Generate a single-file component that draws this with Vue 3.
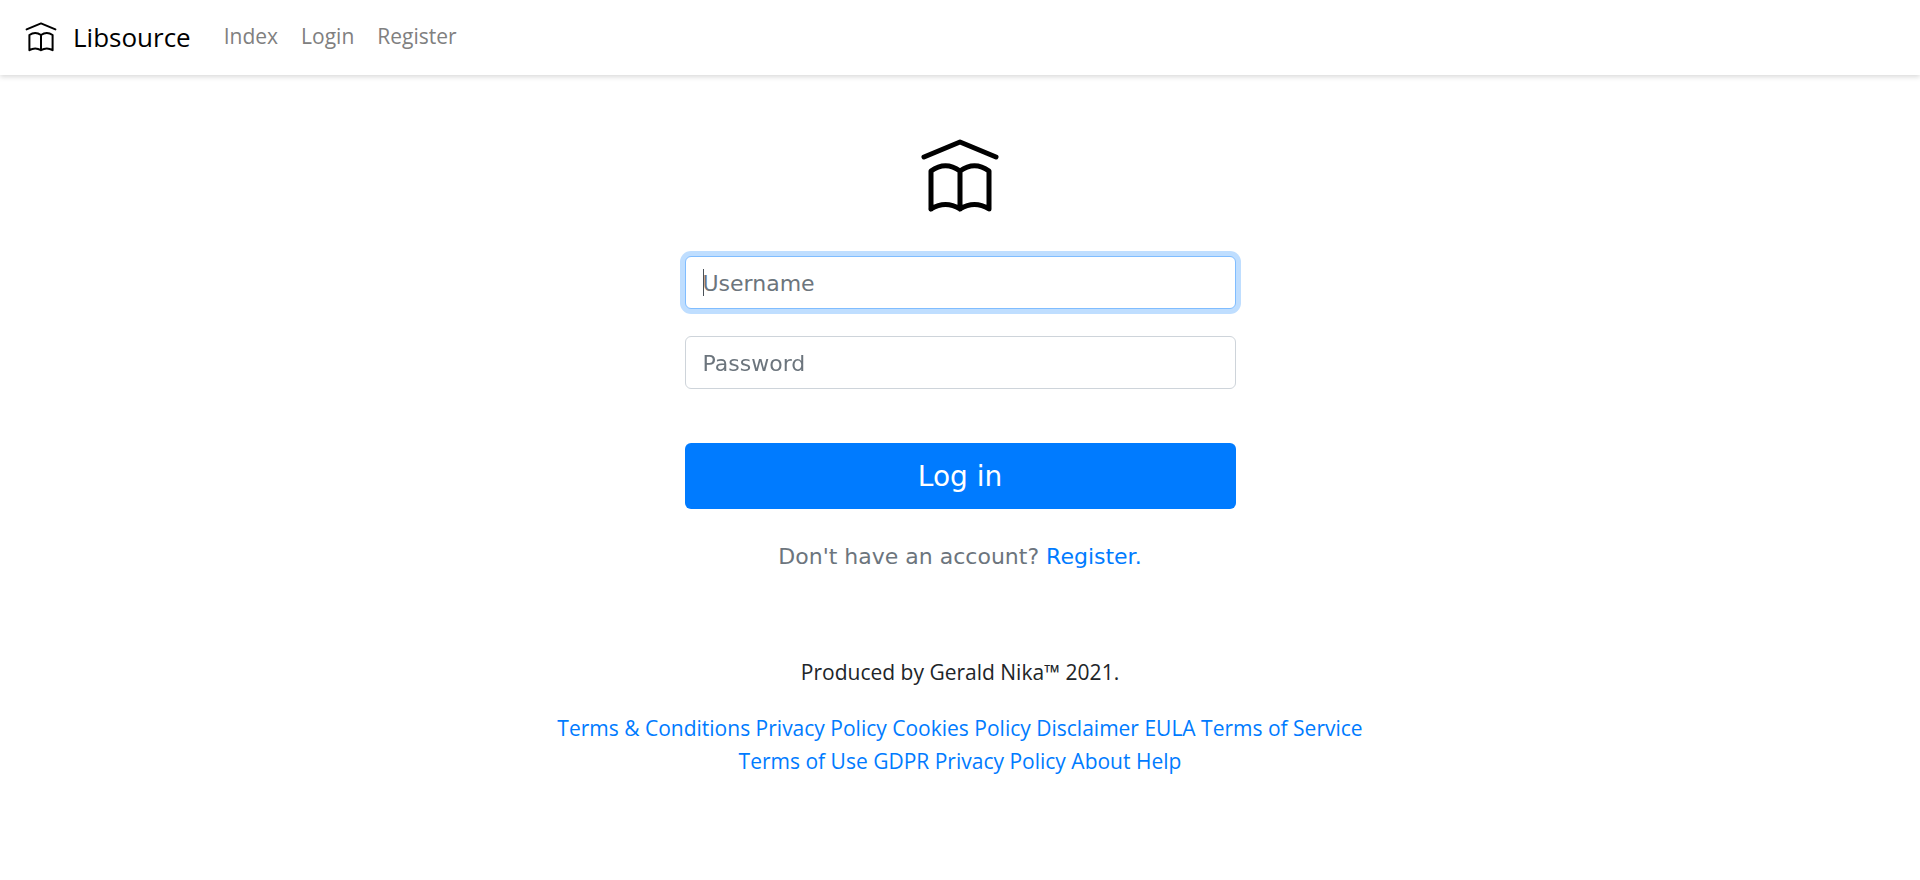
<script setup>
import { onMounted, ref } from 'vue'

const username = ref('')
const password = ref('')
const usernameField = ref(null)

const navLinks = ['Index', 'Login', 'Register']
const footerLinks = [
  'Terms & Conditions',
  'Privacy Policy',
  'Cookies Policy',
  'Disclaimer',
  'EULA',
  'Terms of Service',
  'Terms of Use',
  'GDPR Privacy Policy',
  'About',
  'Help',
]

onMounted(() => usernameField.value.focus())
</script>

<template>
  <div class="page">
    <header class="navbar">
      <a class="brand" href="#">
        <svg class="brand-logo" viewBox="0 0 80 74" aria-hidden="true">
          <path d="M4 18 40 3l36 15M11 70V32q14.500-10.500 29 0v38q-14.500-9-29 0M40 32q14.500-10.500 29 0v38q-14.500-9-29 0" />
        </svg>
        <span>Libsource</span>
      </a>
      <nav class="nav">
        <a v-for="link in navLinks" :key="link" href="#">{{ link }}</a>
      </nav>
    </header>

    <main class="login">
      <svg class="logo" viewBox="0 0 80 74" role="img" aria-label="Libsource">
        <path d="M4 18 40 3l36 15M11 70V32q14.500-10.500 29 0v38q-14.500-9-29 0M40 32q14.500-10.500 29 0v38q-14.500-9-29 0" />
      </svg>
      <form class="form" @submit.prevent>
        <div class="field-row">
          <input ref="usernameField" v-model="username" class="field" type="text" aria-label="Username" placeholder="Username" autofocus />
          <span class="caret" aria-hidden="true"></span>
        </div>
        <div class="field-row">
          <input v-model="password" class="field" type="password" aria-label="Password" placeholder="Password" />
          <span class="caret" aria-hidden="true"></span>
        </div>
        <button class="submit" type="submit">Log in</button>
        <p class="signup">Don't have an account? <a href="#">Register.</a></p>
      </form>
    </main>

    <footer class="footer">
      <p>Produced by Gerald Nika™ 2021.</p>
      <p class="footer-links">
        <template v-for="link in footerLinks" :key="link"><a href="#">{{ link }}</a>{{ ' ' }}</template>
      </p>
    </footer>
  </div>
</template>

<style>
body {
  margin: 0;
  background: #fff;
}
</style>

<style scoped>
.page {
  font-family: 'Segoe UI', 'Open Sans', sans-serif;
  font-size: 21px;
  line-height: 33px;
  color: #212529;
}
a {
  color: #007bff;
  text-decoration: none;
}
p {
  margin: 0;
}
svg {
  fill: none;
  stroke: #000;
  stroke-width: 5;
  stroke-linecap: round;
  stroke-linejoin: round;
}
.navbar {
  display: flex;
  align-items: center;
  height: 75px;
  padding: 0 25px;
  box-shadow: 0 2px 5px rgba(0, 0, 0, 0.15);
}
.brand {
  display: flex;
  align-items: center;
  gap: 16px;
  margin-right: 33px;
  font-size: 26px;
  color: #000;
}
.brand-logo {
  width: 32px;
  height: 30px;
  margin-bottom: 2px;
}
.nav {
  display: flex;
  gap: 23px;
  margin-bottom: 2px;
}
.nav a {
  color: #808080;
}
.login {
  display: flex;
  flex-direction: column;
  align-items: center;
  padding-top: 64px;
  font-family: 'DejaVu Sans', sans-serif;
  font-size: 22px;
}
.logo {
  width: 80px;
  height: 74px;
  margin-bottom: 43px;
}
.form {
  display: flex;
  flex-direction: column;
  width: 90%;
  max-width: 551px;
}
.field-row {
  position: relative;
  margin-bottom: 27px;
}
.field {
  display: block;
  box-sizing: border-box;
  width: 100%;
  height: 53px;
  padding: 1px 17px 0;
  border: 1px solid #ced4da;
  border-radius: 6px;
  background: #fff;
  font: inherit;
  color: #495057;
}
.field::placeholder {
  color: #6c757d;
  opacity: 1;
}
.field:focus {
  border-color: #80bdff;
  outline: none;
  box-shadow: 0 0 0 5px #bfdeff;
}
.field:placeholder-shown {
  caret-color: transparent;
}
.caret {
  display: none;
  position: absolute;
  top: 13px;
  left: 18px;
  width: 1px;
  height: 27px;
  background: #495057;
  pointer-events: none;
}
.field:focus:placeholder-shown + .caret {
  display: block;
}
.submit {
  height: 66px;
  margin: 27px 0 31px;
  border: 0;
  border-radius: 6px;
  background: #007bff;
  font: inherit;
  font-size: 28px;
  color: #fff;
}
.signup {
  text-align: center;
  color: #6c757d;
}
.footer {
  max-width: 828px;
  margin: 83px auto 0;
  text-align: center;
}
.footer-links {
  margin-top: 23px;
}
</style>
